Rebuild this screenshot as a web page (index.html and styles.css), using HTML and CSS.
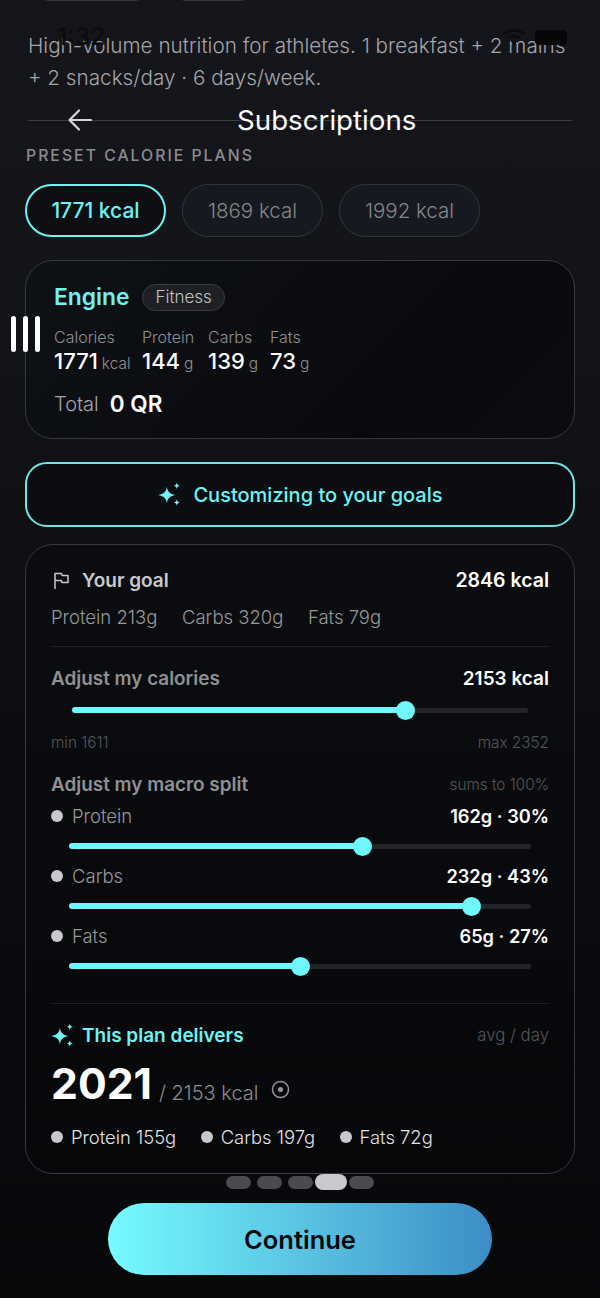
FILE: index.html
```html
<!DOCTYPE html>
<html lang="en">
<head>
<meta charset="utf-8">
<title>Subscriptions</title>
<link rel="stylesheet" href="styles.css">
</head>
<body>
<div class="screen">
  <div class="status">
    <span class="time">1:32</span>
    <div class="status-icons">
      <svg class="wifi" width="24" height="18" viewBox="0 0 24 18"><path d="M1.500 6.500a15 15 0 0 1 21 0M5.500 10.500a9.500 9.500 0 0 1 13 0" fill="none" stroke="#0b0c0f" stroke-width="3"/><path d="M12 17l-3.600-4a5 5 0 0 1 7.200 0z" fill="#0b0c0f"/></svg>
      <span class="battery"></span>
    </div>
  </div>
  <div class="prev-pills"><span class="prev-a"></span><span class="prev-b"></span></div>
  <p class="desc">High-volume nutrition for athletes. 1 breakfast + 2 mains + 2 snacks/day · 6 days/week.</p>
  <div class="rule"></div>
  <div class="nav">
    <svg class="back" width="26" height="24" viewBox="0 0 26 24"><path d="M24 12H3M12 2.500L2.500 12l9.500 9.500" fill="none" stroke="#d6d7da" stroke-width="2.200" stroke-linecap="round" stroke-linejoin="round"/></svg>
    <span class="title">Subscriptions</span>
  </div>
  <div class="section-label">PRESET CALORIE PLANS</div>
  <div class="pills">
    <span class="pill pill-on">1771 kcal</span>
    <span class="pill">1869 kcal</span>
    <span class="pill">1992 kcal</span>
  </div>
  <section class="card plan">
    <div class="plan-head"><span class="plan-name">Engine</span><span class="tag">Fitness</span></div>
    <div class="stats">
      <div class="stat s1"><span class="stat-label">Calories</span><span class="stat-value">1771<small>kcal</small></span></div>
      <div class="stat s2"><span class="stat-label">Protein</span><span class="stat-value">144<small>g</small></span></div>
      <div class="stat s3"><span class="stat-label">Carbs</span><span class="stat-value">139<small>g</small></span></div>
      <div class="stat"><span class="stat-label">Fats</span><span class="stat-value">73<small>g</small></span></div>
    </div>
    <div class="total"><span class="total-label">Total</span><span class="total-value">0 QR</span></div>
  </section>
  <div class="handle"><i></i><i></i><i></i></div>
  <button class="customize">
    <svg width="25" height="25" viewBox="0 0 24 24"><path d="M9.500 4.500c.7 4.800 2.700 6.800 8 8-5.300 1.200-7.300 3.200-8 8-.7-4.800-2.700-6.800-8.500-8 5.800-1.200 7.800-3.200 8.500-8zM19 0.500c.3 2 1.100 2.800 3 3.200-1.900.4-2.700 1.200-3 3.200-.3-2-1.100-2.800-3-3.200 1.900-.4 2.700-1.200 3-3.200zM19 16.500c.3 2 1.100 2.800 3 3.200-1.900.4-2.700 1.200-3 3.200-.3-2-1.100-2.800-3-3.200 1.900-.4 2.700-1.200 3-3.200z" fill="#6ff2f4"/></svg>
    <span>Customizing to your goals</span>
  </button>
  <section class="card custom">
    <div class="row goal-row">
      <span class="goal-title">
        <svg width="19" height="19" viewBox="0 0 19 19"><path d="M3 18V2.500h6.500l.8 2H16v7H10l-.8-2H3" fill="none" stroke="#c9cacd" stroke-width="1.500" stroke-linejoin="round"/></svg>
        Your goal
      </span>
      <span class="strong">2846 kcal</span>
    </div>
    <div class="goal-macros"><span>Protein 213g</span><span>Carbs 320g</span><span>Fats 79g</span></div>
    <div class="divider d1"></div>
    <div class="row adj-row"><span class="adj-title">Adjust my calories</span><span class="strong">2153 kcal</span></div>
    <div class="slider cal"><div class="fill" style="width:73.200%"><b></b></div></div>
    <div class="row minmax"><span>min 1611</span><span>max 2352</span></div>
    <div class="row split-row"><span class="adj-title">Adjust my macro split</span><span class="hint">sums to 100%</span></div>
    <div class="row macro"><span class="macro-name"><i class="dot"></i>Protein</span><span class="strong sm">162g · 30%</span></div>
    <div class="slider mac"><div class="fill" style="width:63.600%"><b></b></div></div>
    <div class="row macro"><span class="macro-name"><i class="dot"></i>Carbs</span><span class="strong sm">232g · 43%</span></div>
    <div class="slider mac"><div class="fill" style="width:87.200%"><b></b></div></div>
    <div class="row macro"><span class="macro-name"><i class="dot"></i>Fats</span><span class="strong sm">65g · 27%</span></div>
    <div class="slider mac"><div class="fill" style="width:50%"><b></b></div></div>
    <div class="divider d2"></div>
    <div class="row plan-row">
      <span class="delivers">
        <svg width="25" height="25" viewBox="0 0 24 24"><path d="M9.500 4.500c.7 4.800 2.700 6.800 8 8-5.300 1.200-7.300 3.200-8 8-.7-4.800-2.700-6.800-8.500-8 5.800-1.200 7.800-3.200 8.500-8zM19 0.500c.3 2 1.100 2.800 3 3.200-1.900.4-2.700 1.200-3 3.200-.3-2-1.100-2.800-3-3.200 1.900-.4 2.700-1.200 3-3.200zM19 16.500c.3 2 1.100 2.800 3 3.200-1.900.4-2.700 1.200-3 3.200-.3-2-1.100-2.800-3-3.200 1.900-.4 2.700-1.200 3-3.200z" fill="#6ff2f4"/></svg>
        This plan delivers
      </span>
      <span class="avg">avg / day</span>
    </div>
    <div class="big-row">
      <span class="big">2021</span><span class="of">/ 2153 kcal</span>
      <svg class="target" width="19" height="19" viewBox="0 0 19 19"><circle cx="9.500" cy="9.500" r="8" fill="none" stroke="#97989c" stroke-width="1.500"/><circle cx="9.500" cy="9.500" r="2.500" fill="#97989c"/></svg>
    </div>
    <div class="legend">
      <span><i class="dot"></i>Protein 155g</span>
      <span><i class="dot"></i>Carbs 197g</span>
      <span><i class="dot"></i>Fats 72g</span>
    </div>
  </section>
  <div class="pager"><i></i><i></i><i></i><i class="on"></i><i></i></div>
  <button class="cta">Continue</button>
</div>
</body>
</html>
```
FILE: styles.css
```css
* { box-sizing: border-box; }
html, body { margin: 0; padding: 0; }
body { background: #08090b; font-family: Inter, "Liberation Sans", sans-serif; }
.screen {
  position: relative;
  width: 600px;
  height: 1298px;
  overflow: hidden;
  padding: 0 25px;
  background: linear-gradient(180deg, #15161b 0%, #121418 25%, #0b0d10 55%, #07080a 100%);
}
.status { position: absolute; top: 22px; left: 57px; right: 33px; display: flex; justify-content: space-between; align-items: center; }
.time { font-size: 24px; font-weight: 600; color: #0b0c0f; line-height: 30px; }
.status-icons { display: flex; gap: 9px; align-items: center; }
.battery { width: 32px; height: 15px; border-radius: 4px; background: #060708; }
.prev-pills { display: flex; height: 20px; margin-top: -19px; padding-left: 14px; gap: 31px; }
.prev-pills span { height: 20px; border: 1px solid #3a3b40; border-radius: 14px; }
.prev-a { width: 106px; }
.prev-b { width: 74px; }
.desc { margin: 29px 0 0; padding-left: 3px; font-size: 20.700px; line-height: 32px; font-weight: 300; color: #a4a5a9; width: 550px; }
.rule { height: 1px; margin: 26px 3px 0; background: #3b3c41; }
.nav { position: relative; height: 53px; margin-top: -27px; display: flex; align-items: flex-start; padding-top: 14px; }
.back { margin-left: 42px; }
.title { margin-left: 144px; margin-top: -6px; font-size: 27.700px; font-weight: 400; color: #fff; line-height: 36px; }
.section-label { margin-left: 1px; font-size: 15.800px; line-height: 18px; font-weight: 500; letter-spacing: 2px; color: #8b8c91; }
.pills { display: flex; gap: 16px; margin-top: 19px; }
.pill { width: 141px; height: 53px; border-radius: 27px; border: 1.500px solid #34353a; background: #171920; display: flex; align-items: center; justify-content: center; font-size: 20.500px; font-weight: 300; color: #85868b; }
.pill-on { border: 2px solid #6ff2f4; background: #0d0f13; color: #6ff2f4; font-size: 21px; font-weight: 500; }
.card { border: 1px solid #38393d; border-radius: 28px; background: linear-gradient(135deg, #0e1116, #090a0d 70%, #0b0c10); }
.plan { height: 179px; margin-top: 23px; padding: 22px 28px 0; }
.plan-head { display: flex; align-items: center; gap: 13px; height: 28px; }
.plan-name { font-size: 22.800px; font-weight: 600; color: #6ff2f4; line-height: 28px; }
.tag { height: 27px; padding: 0 12px; border-radius: 14px; border: 1px solid #3c3d42; background: #1f2024; font-size: 17px; font-weight: 300; color: #c2c3c6; line-height: 25px; }
.stats { display: flex; margin-top: 17px; }
.stat { display: flex; flex-direction: column; margin-right: 12px; }
.s1 { width: 76px; }
.s2 { width: 54px; }
.s3 { width: 50px; }
.stat-label { font-size: 16px; font-weight: 300; line-height: 18px; color: #8f9095; }
.stat-value { font-size: 22px; font-weight: 500; line-height: 30px; color: #fff; white-space: nowrap; }
.stat-value small { font-size: 15.500px; font-weight: 300; color: #8f9095; margin-left: 4px; }
.total { display: flex; align-items: center; gap: 11px; margin-top: 11px; line-height: 28px; }
.total-label { font-size: 20px; font-weight: 300; color: #a4a5a9; }
.total-value { font-size: 22.500px; font-weight: 600; color: #fff; }
.handle { position: absolute; left: 11px; top: 316px; display: flex; gap: 7px; }
.handle i { width: 5px; height: 36px; border-radius: 3px; background: #fff; }
.customize { display: flex; width: 100%; height: 65px; margin-top: 23px; align-items: center; justify-content: center; gap: 11px; border: 2px solid #6ee6e8; border-radius: 22px; background: #0b0d11; color: #6ff2f4; font: 500 20px Inter, sans-serif; }
.custom { height: 630px; margin-top: 17px; padding: 23px 25px 0; background: linear-gradient(180deg, #0b0d10, #060709); }
.row { display: flex; justify-content: space-between; align-items: center; }
.goal-row { height: 24px; }
.goal-title { display: flex; align-items: center; gap: 11px; font-size: 19px; font-weight: 600; color: #c9cacd; padding-left: 1px; }
.strong { font-size: 19.500px; font-weight: 600; color: #fff; }
.strong.sm { font-size: 18.200px; }
.goal-macros { display: flex; gap: 24.500px; margin-top: 13px; font-size: 18.500px; line-height: 24px; font-weight: 300; color: #97989c; }
.divider { height: 1px; background: #212226; }
.d1 { margin-top: 17px; }
.adj-row { height: 24px; margin-top: 19px; }
.adj-title { font-size: 18.900px; font-weight: 600; color: #8f9095; }
.adj-row .strong { font-size: 19px; }
.slider { position: relative; height: 20px; display: flex; align-items: center; }
.slider::before { content: ""; position: absolute; left: 0; right: 0; top: 7.500px; height: 5px; border-radius: 3px; background: #232428; }
.fill { position: relative; height: 6px; border-radius: 3px; background: #6ff8fb; }
.fill b { position: absolute; right: -9.500px; top: -6.500px; width: 19px; height: 19px; border-radius: 50%; background: #6ff8fb; }
.cal { margin: 10px 21px 0; }
.mac { margin: 8px 18px 0; }
.minmax { height: 18px; margin-top: 13px; font-size: 15.300px; font-weight: 300; color: #55565b; }
.split-row { height: 24px; margin-top: 21px; }
.hint { font-size: 15.300px; font-weight: 300; color: #55565b; }
.macro { height: 24px; margin-top: 8px; }
.macro-name { display: flex; align-items: center; gap: 9px; font-size: 18.500px; font-weight: 300; color: #97989c; }
.dot { display: inline-block; width: 12px; height: 12px; border-radius: 50%; background: #c8c9ce; }
.d2 { margin-top: 27px; }
.plan-row { height: 24px; margin-top: 19px; }
.delivers { display: flex; align-items: center; gap: 7px; font-size: 19px; font-weight: 600; color: #6ff2f4; }
.delivers svg { margin-left: -1px; }
.avg { font-size: 16.800px; font-weight: 300; color: #55565b; }
.big-row { position: relative; display: flex; align-items: flex-end; height: 49px; margin-top: 13px; }
.big { font-size: 42.700px; font-weight: 700; line-height: 50px; color: #fff; }
.of { margin-left: 7px; margin-bottom: 4px; font-size: 20px; line-height: 24px; font-weight: 300; color: #8b8c91; }
.target { margin-left: 13px; margin-bottom: 10px; }
.legend { display: flex; gap: 24.500px; margin-top: 16px; font-size: 18.400px; line-height: 24px; font-weight: 300; color: #e2e3e6; }
.legend span { display: flex; align-items: center; gap: 8px; }
.pager { display: flex; align-items: center; justify-content: center; gap: 6px; height: 16px; }
.pager i { width: 25px; height: 13px; border-radius: 7px; background: #4a4b50; }
.pager i.on { width: 32px; height: 16px; border-radius: 8px; background: #c8c9ce; margin: 0 -4px; }
.cta { display: block; width: 384px; height: 72px; margin: 13px auto 0; padding-top: 2px; border: 0; border-radius: 36px; background: linear-gradient(90deg, #76fbff 0%, #3d8dc6 100%); color: #04090d; font: 600 25.500px Inter, sans-serif; }
```
